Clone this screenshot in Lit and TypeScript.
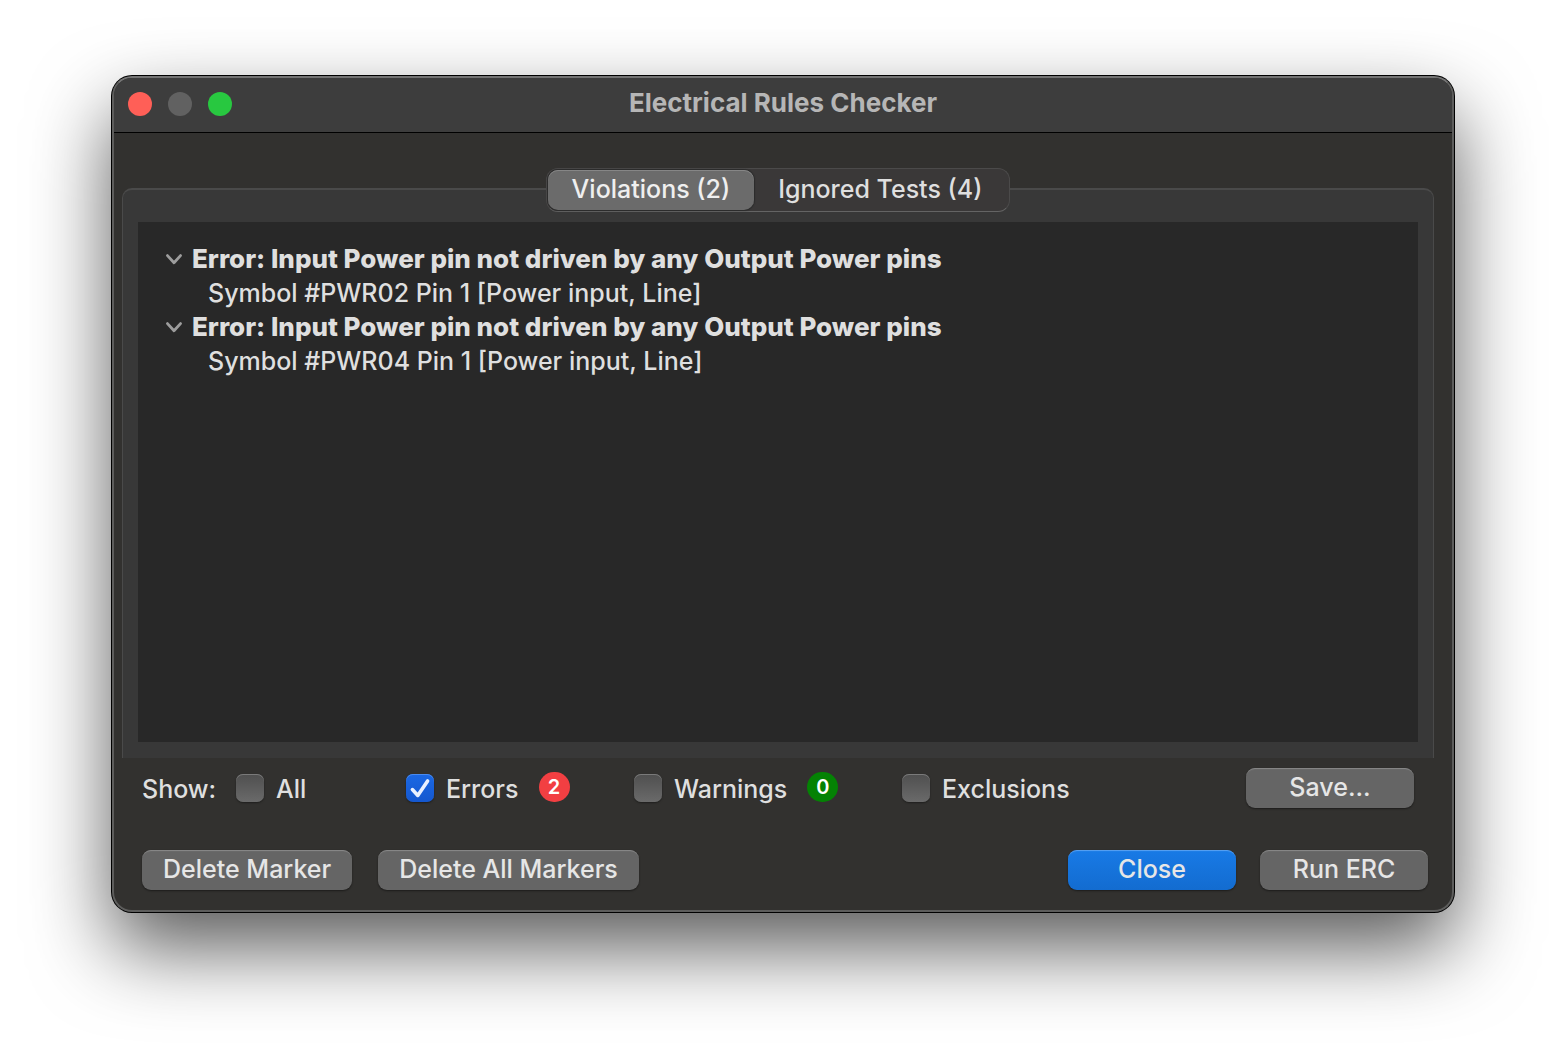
import { LitElement, html, svg, css } from "lit";
import { customElement, state } from "lit/decorators.js";
import { classMap } from "lit/directives/class-map.js";

interface Violation {
  title: string;
  items: string[];
  open: boolean;
}

interface Filter {
  id: string;
  label: string;
  checked: boolean;
  count?: number;
  tone?: string;
}

const chevron = svg`<path d="M1.500 4.600L8 11.800L14.500 4.600" fill="none" stroke="currentColor" stroke-width="2.800" stroke-linecap="round" stroke-linejoin="round"/>`;

@customElement("app-root")
export class AppRoot extends LitElement {
  static styles = css`
    :host {
      display: flex;
      box-sizing: border-box;
      min-height: 100vh;
      padding: 76px 112px 148px;
      background: #fff;
      color: #dfdfdf;
      font: 500 25px/34px Inter, "Liberation Sans", sans-serif;
    }
    * {
      box-sizing: border-box;
    }
    button,
    input {
      font: inherit;
      color: inherit;
      margin: 0;
    }
    .window {
      flex: 1;
      min-width: 0;
      display: flex;
      flex-direction: column;
      border: 2px solid #5d5d5c;
      border-top-color: #747474;
      border-radius: 20px;
      background: #32312f;
      box-shadow: 0 0 0 1px #000, 0 36px 80px rgba(0, 0, 0, 0.65);
    }
    .titlebar {
      display: grid;
      grid-template-columns: 1fr auto 1fr;
      align-items: center;
      height: 55px;
      padding: 0 14px 2px;
      border-bottom: 1px solid #000;
      border-radius: 18px 18px 0 0;
      background: #3d3d3d;
    }
    .lights {
      display: flex;
      gap: 16px;
    }
    .light {
      width: 24px;
      height: 24px;
      padding: 0;
      border: 0;
      border-radius: 50%;
    }
    .red {
      background: #ff5f57;
    }
    .grey {
      background: #616161;
    }
    .green {
      background: #28c840;
    }
    .title {
      margin: 0;
      padding-bottom: 2px;
      font-size: 26px;
      font-weight: 700;
      color: #b6b6b6;
    }
    .content {
      flex: 1;
      display: flex;
      flex-direction: column;
      padding: 55px 18px 20px 8px;
    }
    .panel {
      flex: 1;
      display: flex;
      flex-direction: column;
      align-items: center;
      padding: 0 15px 16px;
      border: 1px solid #4a4a4a;
      border-top-width: 2px;
      border-bottom: 0;
      border-radius: 10px 10px 0 0;
      background: #383838;
    }
    .tabs {
      display: flex;
      height: 44px;
      margin: -22px 0 10px;
      padding: 1px;
      border: 1px solid #4b4a4a;
      border-bottom-color: #646464;
      border-radius: 12px;
      background: #3a3838;
    }
    .tab {
      padding: 0 24px 2px;
      border: 0;
      border-radius: 10px;
      background: none;
      line-height: 38px;
    }
    .tab:last-child {
      padding-right: 26px;
    }
    .tab.active {
      background: #6b6b6b;
      box-shadow: inset 0 1px #868686, 0 0 1px 1px #2c2c2c;
      color: #efefef;
    }
    .tree {
      flex: 1;
      align-self: stretch;
      margin: 0;
      padding: 20px 28px;
      list-style: none;
      background: #282828;
    }
    .node {
      display: flex;
      align-items: center;
      gap: 10px;
      padding: 0;
      border: 0;
      background: none;
      font-size: 26px;
      font-weight: 800;
      line-height: 34px;
      text-align: left;
    }
    .chevron {
      width: 16px;
      height: 16px;
      flex: none;
      color: #9d9d9d;
    }
    .closed {
      transform: rotate(-90deg);
    }
    .children {
      margin: 0;
      padding: 0 0 0 42px;
      list-style: none;
    }
    .filters {
      display: flex;
      align-items: center;
      justify-content: space-between;
      padding: 10px 20px 0;
    }
    .options {
      display: grid;
      grid-template-columns: 94px 170px 228px 268px auto;
      align-items: center;
    }
    .option {
      display: flex;
      align-items: center;
    }
    .check {
      display: flex;
      align-items: center;
      gap: 12px;
    }
    .caption {
      padding-top: 2px;
    }
    .box {
      appearance: none;
      width: 28px;
      height: 28px;
      border-radius: 7px;
      background: linear-gradient(#4f4f4f, #6a6a6a);
      box-shadow: inset 0 1px #7a7a7a, 0 1px 2px rgba(0, 0, 0, 0.4);
    }
    .box:checked {
      background: linear-gradient(#1b68e4, #1558cf);
      box-shadow: inset 0 1px #4a8bf0, 0 1px 2px rgba(0, 0, 0, 0.4);
    }
    .mark {
      display: grid;
    }
    .mark > * {
      grid-area: 1 / 1;
    }
    .tick {
      width: 28px;
      height: 28px;
      pointer-events: none;
    }
    .badge {
      min-width: 31px;
      height: 30px;
      margin: 0 0 2px 20px;
      border-radius: 15px;
      color: #fff;
      font-size: 20px;
      font-weight: 600;
      line-height: 30px;
      text-align: center;
    }
    .error {
      background: #f23f42;
    }
    .ok {
      background: #048204;
    }
    .actions {
      display: flex;
      justify-content: space-between;
      padding: 42px 6px 0 20px;
    }
    .group {
      display: flex;
      gap: 24px;
    }
    .group.left {
      gap: 26px;
    }
    .button {
      min-width: 168px;
      height: 40px;
      padding: 0 21px 2px;
      border: 0;
      border-radius: 9px;
      background: #656565;
      box-shadow: inset 0 2px 1px -1px #8a8a8a, 0 1px 2px rgba(0, 0, 0, 0.45);
      color: #e6e6e6;
      line-height: 38px;
      white-space: nowrap;
    }
    .primary {
      background: linear-gradient(#187ae6, #136cd0);
      box-shadow: inset 0 2px 1px -1px #5aa2f2, 0 1px 2px rgba(0, 0, 0, 0.45);
    }
  `;

  @state() private tab = 0;

  @state() private violations: Violation[] = [
    {
      title: "Error: Input Power pin not driven by any Output Power pins",
      items: ["Symbol #PWR02 Pin 1 [Power input, Line]"],
      open: true,
    },
    {
      title: "Error: Input Power pin not driven by any Output Power pins",
      items: ["Symbol #PWR04 Pin 1 [Power input, Line]"],
      open: true,
    },
  ];

  private filters: Filter[] = [
    { id: "all", label: "All", checked: false },
    { id: "errors", label: "Errors", checked: true, count: 2, tone: "error" },
    { id: "warnings", label: "Warnings", checked: false, count: 0, tone: "ok" },
    { id: "exclusions", label: "Exclusions", checked: false },
  ];

  private toggle(index: number) {
    this.violations = this.violations.map((v, i) => (i === index ? { ...v, open: !v.open } : v));
  }

  private setFilter(filter: Filter, event: Event) {
    filter.checked = (event.target as HTMLInputElement).checked;
    this.requestUpdate();
  }

  private renderNode(v: Violation, index: number) {
    return html`<li>
      <button class="node" aria-expanded=${v.open} @click=${() => this.toggle(index)}>
        <svg class=${classMap({ chevron: true, closed: !v.open })} viewBox="0 0 16 16" aria-hidden="true">${chevron}</svg>
        <span>${v.title}</span>
      </button>
      ${v.open ? html`<ul class="children">${v.items.map((item) => html`<li>${item}</li>`)}</ul>` : null}
    </li>`;
  }

  private renderFilter(f: Filter) {
    return html`<div class="option">
      <label class="check" for=${f.id}>
        <span class="mark">
          <input class="box" type="checkbox" id=${f.id} .checked=${f.checked} @change=${(e: Event) => this.setFilter(f, e)} />
          ${f.checked
            ? html`<svg class="tick" viewBox="0 0 28 28" aria-hidden="true">
                <path d="M6.400 15.600L11.800 21.400L21.600 7" fill="none" stroke="#eaf1ff" stroke-width="3.600" stroke-linecap="round" stroke-linejoin="round" />
              </svg>`
            : null}
        </span>
        <span class="caption">${f.label}</span>
      </label>
      ${f.count === undefined ? null : html`<span class="badge ${f.tone}">${f.count}</span>`}
    </div>`;
  }

  render() {
    const tabs = ["Violations (2)", "Ignored Tests (4)"];
    return html`<main class="window">
      <header class="titlebar">
        <div class="lights">
          <button class="light red" aria-label="Close window"></button>
          <button class="light grey" aria-label="Minimize" disabled></button>
          <button class="light green" aria-label="Zoom"></button>
        </div>
        <h1 class="title">Electrical Rules Checker</h1>
      </header>
      <div class="content">
        <section class="panel">
          <div class="tabs" role="tablist">
            ${tabs.map(
              (label, i) => html`<button
                class=${classMap({ tab: true, active: this.tab === i })}
                role="tab"
                aria-selected=${this.tab === i}
                @click=${() => (this.tab = i)}
              >${label}</button>`
            )}
          </div>
          <ul class="tree">
            ${this.tab === 0 ? this.violations.map((v, i) => this.renderNode(v, i)) : null}
          </ul>
        </section>
        <div class="filters">
          <div class="options">
            <span class="caption">Show:</span>
            ${this.filters.map((f) => this.renderFilter(f))}
          </div>
          <button class="button">Save...</button>
        </div>
        <footer class="actions">
          <div class="group left">
            <button class="button">Delete Marker</button>
            <button class="button">Delete All Markers</button>
          </div>
          <div class="group">
            <button class="button primary">Close</button>
            <button class="button">Run ERC</button>
          </div>
        </footer>
      </div>
    </main>`;
  }
}
